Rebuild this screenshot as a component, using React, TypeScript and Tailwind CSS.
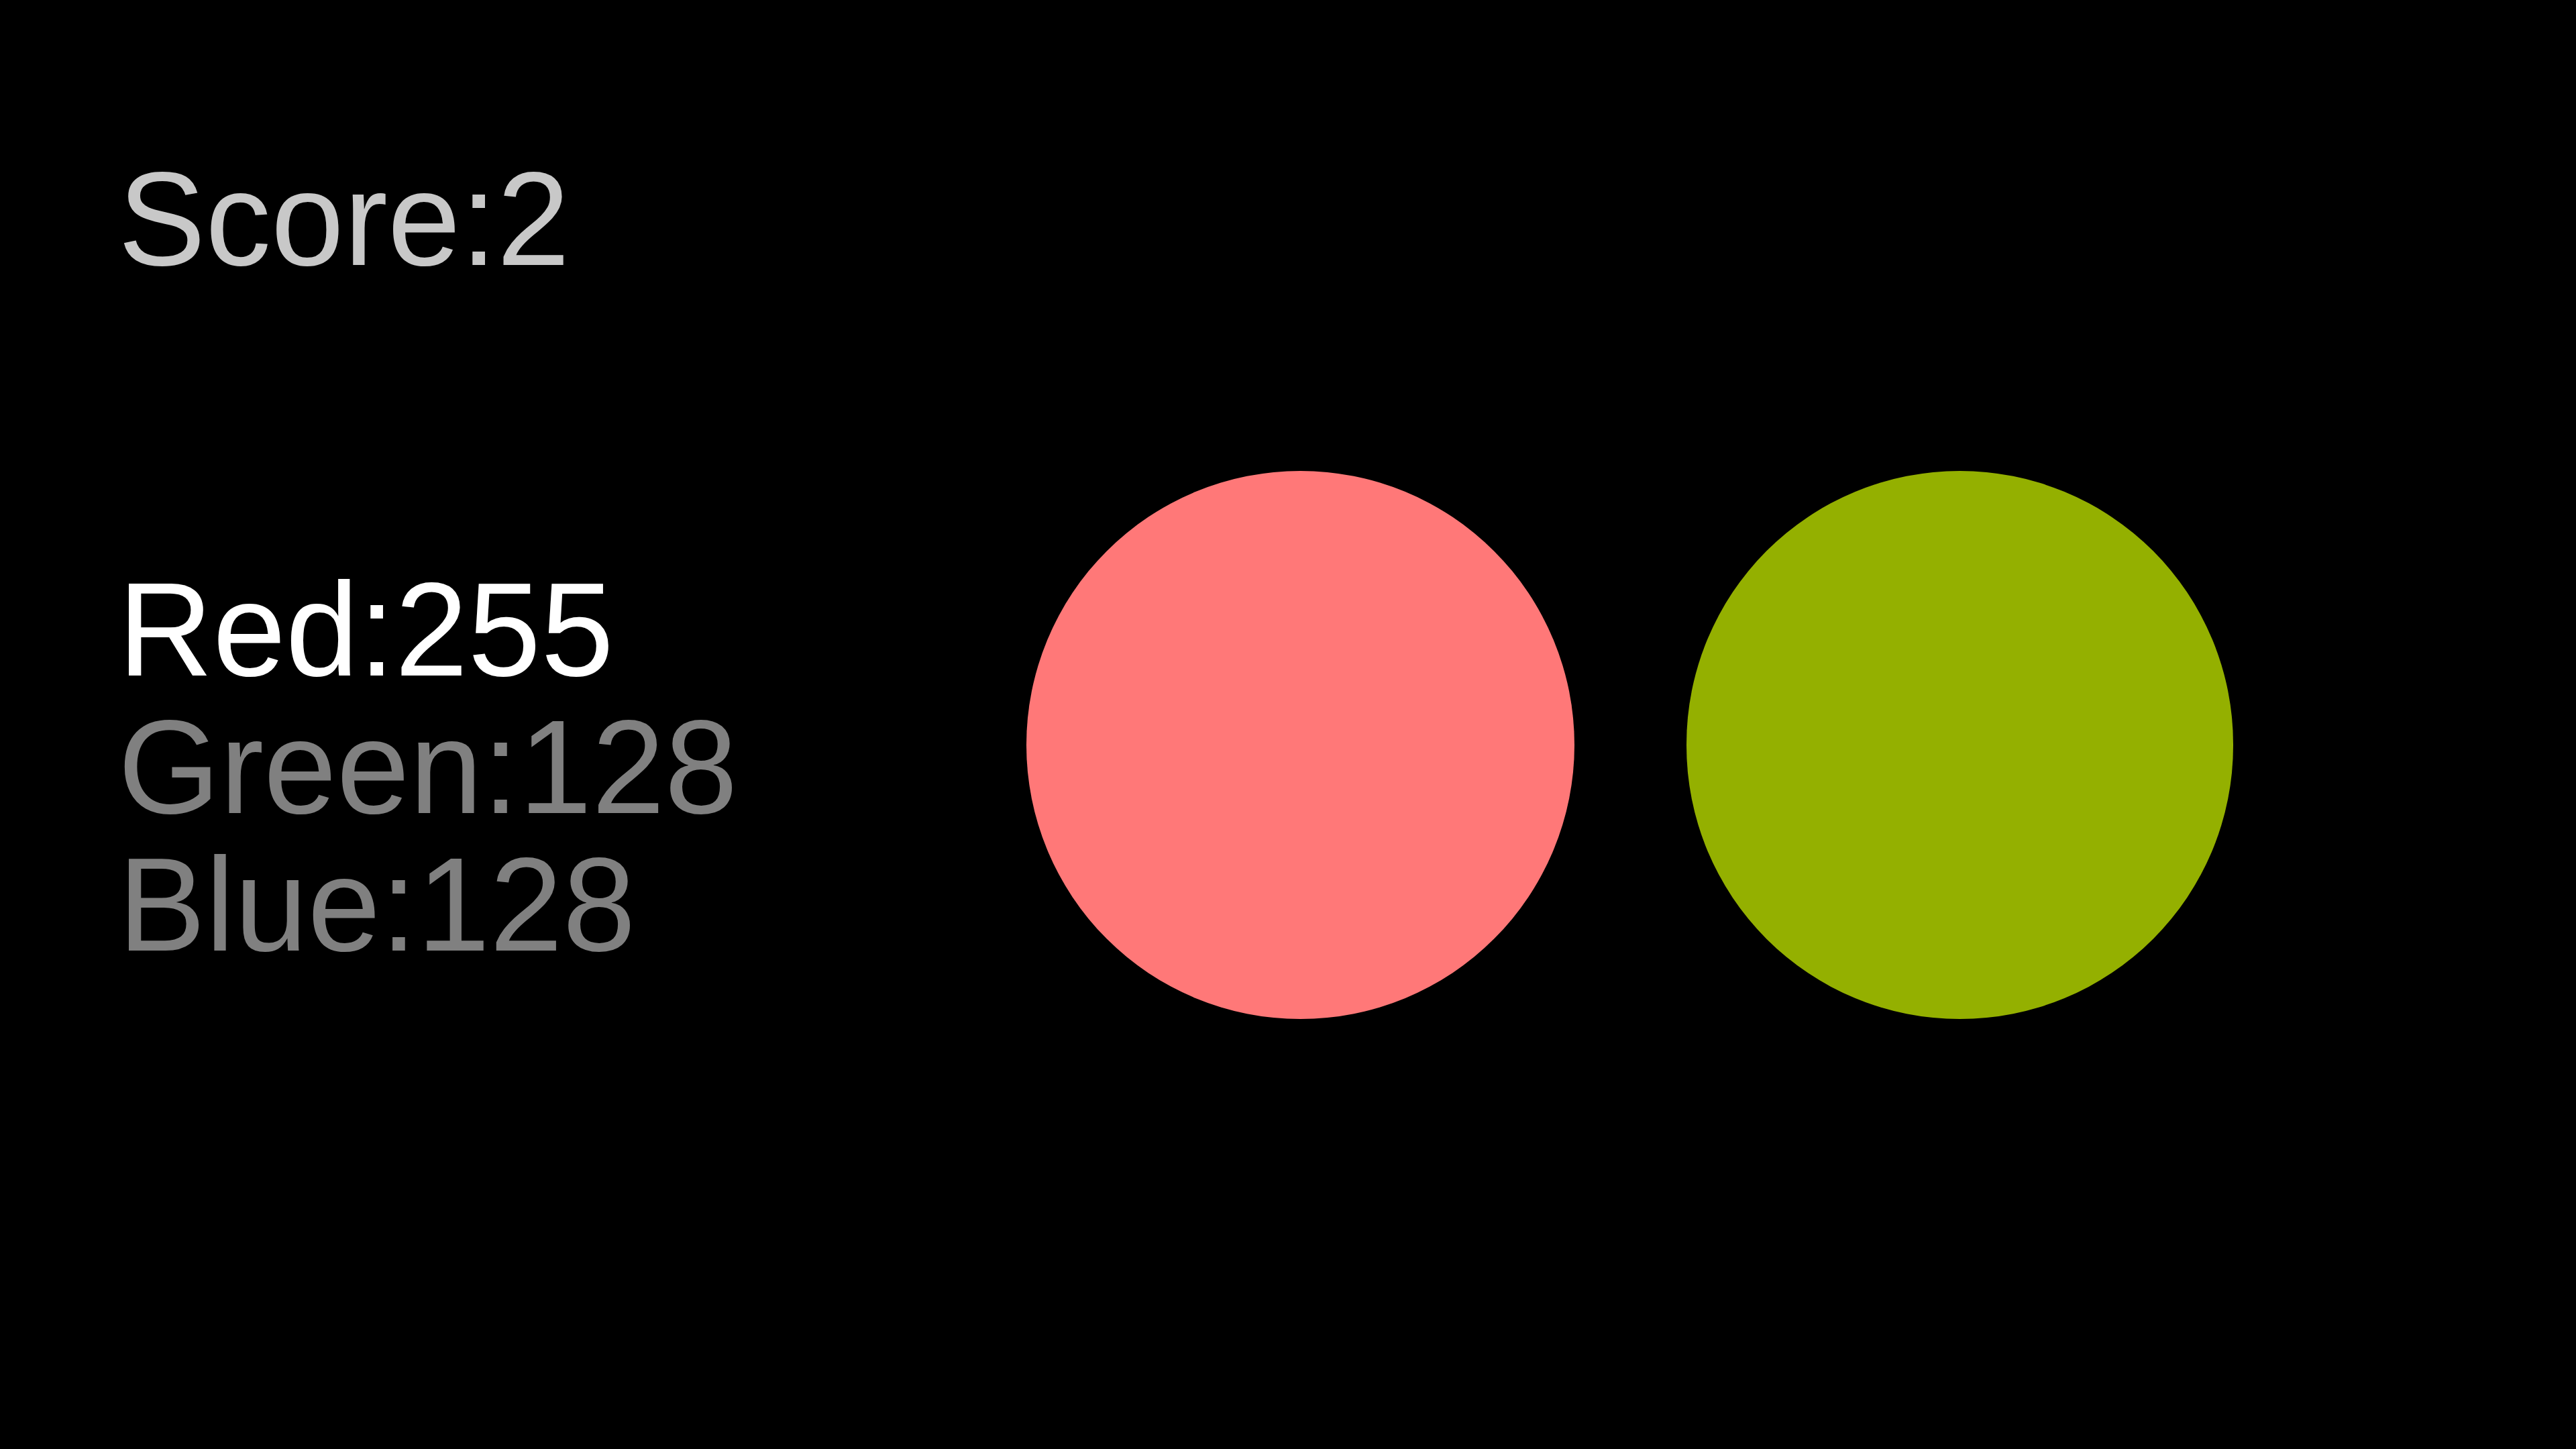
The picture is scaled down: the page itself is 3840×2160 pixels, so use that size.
import React from "react";

export default function App() {
  return (
    <div
      className="w-[3840px] h-[2160px] bg-black flex flex-row items-start pl-[176px] overflow-hidden"
      style={{ fontFamily: '"Liberation Sans", Arial, sans-serif' }}
    >
      <div className="w-[1354px] shrink-0 flex flex-col pt-[224px] text-[198px] leading-[205px] origin-left scale-x-[0.987]">
        <div className="text-[#c8c8c8]">Score:2</div>
        <div className="mt-[407px] flex flex-col">
          <div className="text-white">Red:255</div>
          <div className="text-[#808080]">Green:128</div>
          <div className="text-[#808080]">Blue:128</div>
        </div>
      </div>
      <div className="flex flex-row gap-[167px] pt-[702px]">
        <div className="w-[817px] h-[817px] rounded-full bg-[#ff7878]" />
        <div className="w-[815px] h-[817px] rounded-full bg-[#94b000]" />
      </div>
    </div>
  );
}
